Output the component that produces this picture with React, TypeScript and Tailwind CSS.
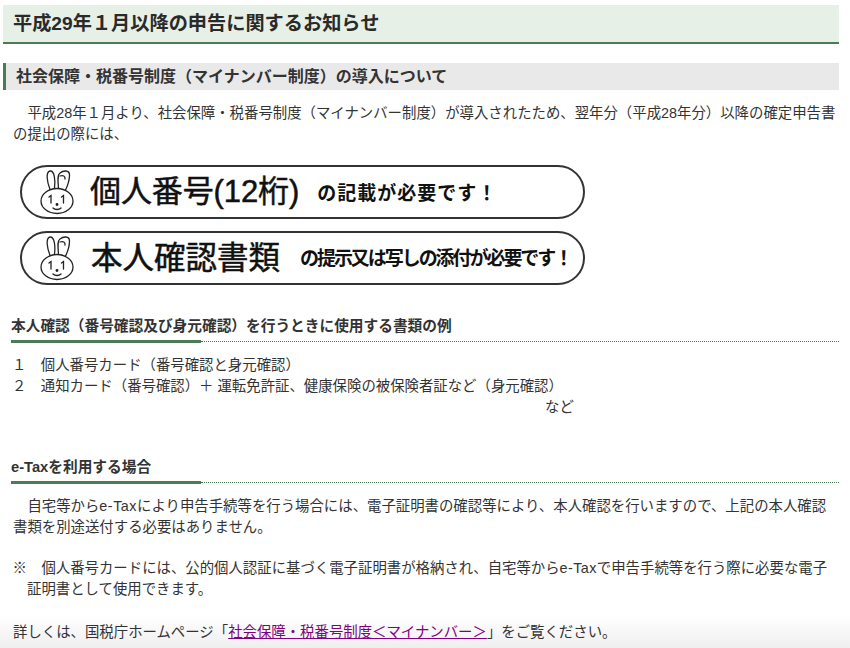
const FONT = "font-['Liberation_Sans','Noto_Sans_CJK_JP',sans-serif]";

function Rabbit() {
  return (
    <svg viewBox="0 0 36 46" className="w-[36px] h-[46px] shrink-0" fill="none" stroke="#222" strokeWidth="1.3" strokeLinecap="round">
      <ellipse cx="17" cy="32" rx="16" ry="12.5" />
      <path d="M10 20.5C7 13 5.5 3 10 2C14.5 1.500 15.500 11 14.500 19" />
      <path d="M18.500 19C18 12 17 6 20 4C23 1.500 29.500 0.500 29.500 6C29.500 11 28 16 25.500 21" />
      <path d="M20 7C23 6 25.500 7 25 10" />
      <path d="M9 28L11 26.500V34" />
      <path d="M21.500 28L23.500 26.500V34" />
      <path d="M13 39C15 41 19 41 21 39" />
      <circle cx="17" cy="35.500" r="0.800" fill="#222" />
    </svg>
  );
}

function Pill({ big, small, bigCls, smallCls }: { big: string; small: string; bigCls: string; smallCls: string }) {
  return (
    <div className="ml-[17px] w-[565px] rounded-full border-2 border-[#333] flex items-center pl-[18px] text-[#111] overflow-hidden h-[54px]">
      <Rabbit />
      <span className={bigCls}>{big}</span>
      <span className={smallCls}>{small}</span>
    </div>
  );
}

function SubHead({ children, cls }: { children: React.ReactNode; cls: string }) {
  return (
    <div className={cls}>
      <div className="pl-[8px] text-[14.7px] leading-[23px] font-bold text-[#333]">{children}</div>
      <div className="flex items-start mt-[2px] h-[3px]">
        <div className="ml-[8px] w-[190px] h-[3px] bg-[#4a7c59]" />
        <div className="flex-1 mt-[1px] border-t border-dotted border-[#4a7c59]" />
      </div>
    </div>
  );
}

export default function App() {
  return (
    <div className={`relative w-[850px] h-[648px] overflow-hidden bg-white ${FONT}`}>
      <div className="absolute left-0 right-0 bottom-0 h-[32px] bg-gradient-to-b from-white to-[#efefef]" />
      <div className="relative w-[839px] pl-[3px] pt-[5px]">
        <h1 className="h-[39px] bg-[#e6f0e6] border-b-2 border-[#4a7c59] pl-[10px] text-[19.2px] leading-[37px] font-bold text-[#2a2a2a]">
          平成29年１月以降の申告に関するお知らせ
        </h1>
        <h2 className="mt-[19px] h-[27px] bg-[#e9e9e9] border-l-[3px] border-[#4a7c59] pl-[10px] text-[16px] leading-[27px] font-bold text-[#333]">
          社会保障・税番号制度（マイナンバー制度）の導入について
        </h2>
        <p className="mt-[13px] pl-[10px] indent-[14.4px] text-[14.4px] leading-[21px] text-[#333] whitespace-nowrap">
          平成28年１月より、社会保障・税番号制度（マイナンバー制度）が導入されたため、翌年分（平成28年分）以降の確定申告書
          <br />
          の提出の際には、
        </p>
        <div className="mt-[20px] flex flex-col gap-[12px]">
          <Pill big="個人番号(12桁)" small="の記載が必要です！" bigCls="ml-[14px] text-[31px] [-webkit-text-stroke:0.5px_#111] tracking-[-0.1px]" smallCls="ml-[18px] mt-[4px] text-[19px] font-bold tracking-[1px]" />
          <Pill big="本人確認書類" small="の提示又は写しの添付が必要です！" bigCls="ml-[15px] mt-[2px] text-[31.500px] [-webkit-text-stroke:0.5px_#111]" smallCls="ml-[20px] mt-[2px] text-[19px] font-bold tracking-[-2.050px]" />
        </div>
        <SubHead cls="mt-[30px]">本人確認（番号確認及び身元確認）を行うときに使用する書類の例</SubHead>
        <div className="mt-[12px] pl-[9px] text-[14.4px] leading-[21px] text-[#333] whitespace-nowrap">
          <div>１　個人番号カード（番号確認と身元確認）</div>
          <div>２　通知カード（番号確認）＋ 運転免許証、健康保険の被保険者証など（身元確認）</div>
          <div className="pl-[533px]">など</div>
        </div>
        <SubHead cls="mt-[38px]">e-Taxを利用する場合</SubHead>
        <p className="mt-[12px] pl-[10px] indent-[14.4px] text-[14.4px] leading-[21px] text-[#333] whitespace-nowrap">
          自宅等から<span className="tracking-[0.5px]">e-Tax</span>により申告手続等を行う場合には、電子証明書の確認等により、本人確認を行いますので、上記の本人確認
          <br />
          書類を別途送付する必要はありません。
        </p>
        <p className="mt-[20px] pl-[24px] -indent-[14.4px] text-[14.4px] leading-[21px] text-[#333] whitespace-nowrap">
          ※　個人番号カードには、公的個人認証に基づく電子証明書が格納され、自宅等から<span className="tracking-[0.4px]">e-Tax</span>で申告手続等を行う際に必要な電子
          <br />
          証明書として使用できます。
        </p>
        <p className="mt-[22px] pl-[10px] text-[14.4px] leading-[21px] text-[#333] whitespace-nowrap">
          詳しくは、国税庁ホームページ「<a className="text-[#800080] underline">社会保障・税番号制度＜マイナンバー＞</a>」をご覧ください。
        </p>
      </div>
    </div>
  );
}
